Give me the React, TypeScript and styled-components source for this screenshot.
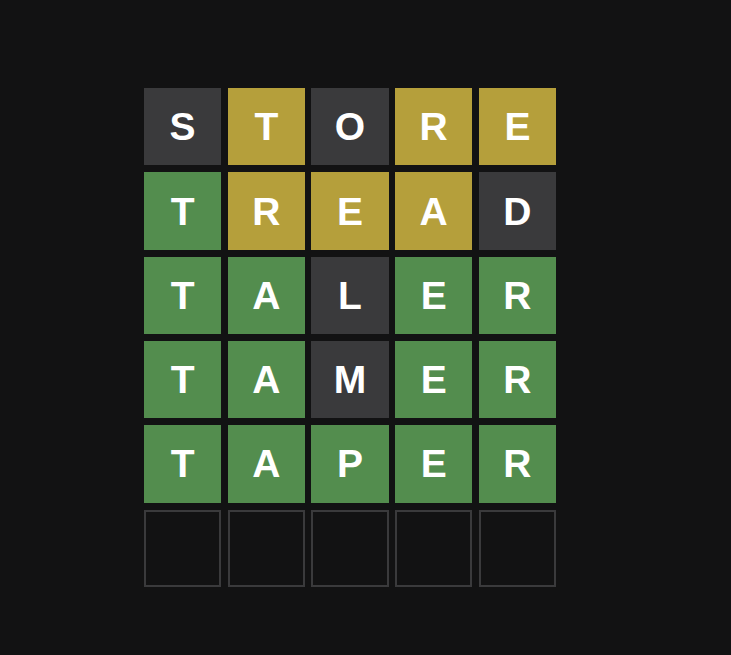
import React from "react";
import styled, { createGlobalStyle } from "styled-components";

const Global = createGlobalStyle`
  html, body { margin: 0; padding: 0; background: #121213; }
  body { font-family: "Liberation Sans", Arial, sans-serif; }
`;

type State = "absent" | "present" | "correct" | "empty";

const colors: Record<State, string> = {
  absent: "#3a3a3c",
  present: "#b59f3b",
  correct: "#538d4e",
  empty: "transparent",
};

const Page = styled.div`
  width: 731px;
  height: 655px;
  box-sizing: border-box;
  padding: 88px 0 0 144px;
  background: #121213;
`;

const Board = styled.div`
  width: 412px;
  height: 499px;
  display: grid;
  grid-template-columns: repeat(5, 1fr);
  grid-template-rows: repeat(6, 1fr);
  gap: 6.9px 6.5px;
`;

const Tile = styled.div<{ $state: State }>`
  box-sizing: border-box;
  display: flex;
  align-items: center;
  justify-content: center;
  background: ${(p) => colors[p.$state]};
  border: ${(p) => (p.$state === "empty" ? "2px solid #3a3a3c" : "none")};
  color: #ffffff;
  font-size: 39px;
  font-weight: 700;
  line-height: 1;
  text-transform: uppercase;
`;

const A: State = "absent";
const P: State = "present";
const C: State = "correct";

const rows: { word: string; states: State[] }[] = [
  { word: "STORE", states: [A, P, A, P, P] },
  { word: "TREAD", states: [C, P, P, P, A] },
  { word: "TALER", states: [C, C, A, C, C] },
  { word: "TAMER", states: [C, C, A, C, C] },
  { word: "TAPER", states: [C, C, C, C, C] },
  { word: "     ", states: ["empty", "empty", "empty", "empty", "empty"] },
];

export default function App() {
  return (
    <>
      <Global />
      <Page>
        <Board>
          {rows.map((r, i) =>
            r.states.map((s, j) => (
              <Tile key={`${i}-${j}`} $state={s}>
                {r.word[j].trim()}
              </Tile>
            ))
          )}
        </Board>
      </Page>
    </>
  );
}
